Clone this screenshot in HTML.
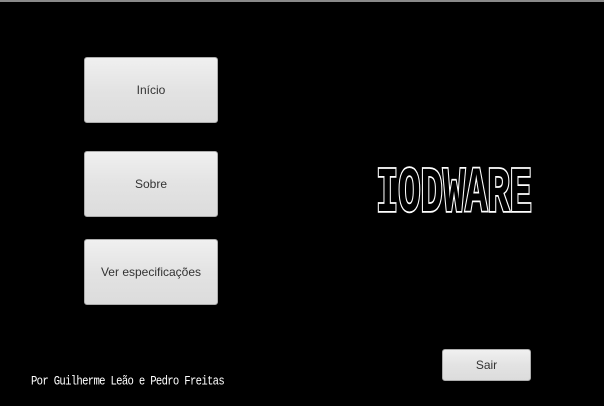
<!DOCTYPE html>
<html><head><meta charset="utf-8"><style>
html,body{margin:0;padding:0}
body{width:604px;height:406px;background:#000;position:relative;overflow:hidden;font-family:"Liberation Sans",sans-serif}
.top{position:absolute;left:0;top:0;width:604px;height:2px;background:#8a8a8a}
.btn{position:absolute;box-sizing:border-box;border:1px solid #adadad;border-radius:3px;background:linear-gradient(#f0f0f0,#e3e3e3 50%,#dcdcdc);color:#333;font-size:12px;display:flex;align-items:center;justify-content:center}
.logo{position:absolute;left:376px;top:163px;font-family:"Liberation Mono",monospace;font-weight:bold;font-size:64px;line-height:64px;color:#000;-webkit-text-stroke:3.5px #fff;paint-order:stroke fill;transform:scaleX(0.58);transform-origin:0 0;letter-spacing:0}
.foot{position:absolute;left:31px;top:375px;color:#fff;font-family:"Liberation Mono",monospace;font-size:10.6px;letter-spacing:-0.68px;transform:scaleY(1.2);transform-origin:0 0}
</style></head><body>
<div class="top"></div>
<div class="btn" style="left:84px;top:57px;width:134px;height:66px">Início</div>
<div class="btn" style="left:84px;top:151px;width:134px;height:66px">Sobre</div>
<div class="btn" style="left:84px;top:239px;width:134px;height:66px">Ver especificações</div>
<div class="btn" style="left:442px;top:349px;width:89px;height:32px">Sair</div>
<div class="logo">IODWARE</div>
<div class="foot">Por Guilherme Leão e Pedro Freitas</div>
</body></html>
